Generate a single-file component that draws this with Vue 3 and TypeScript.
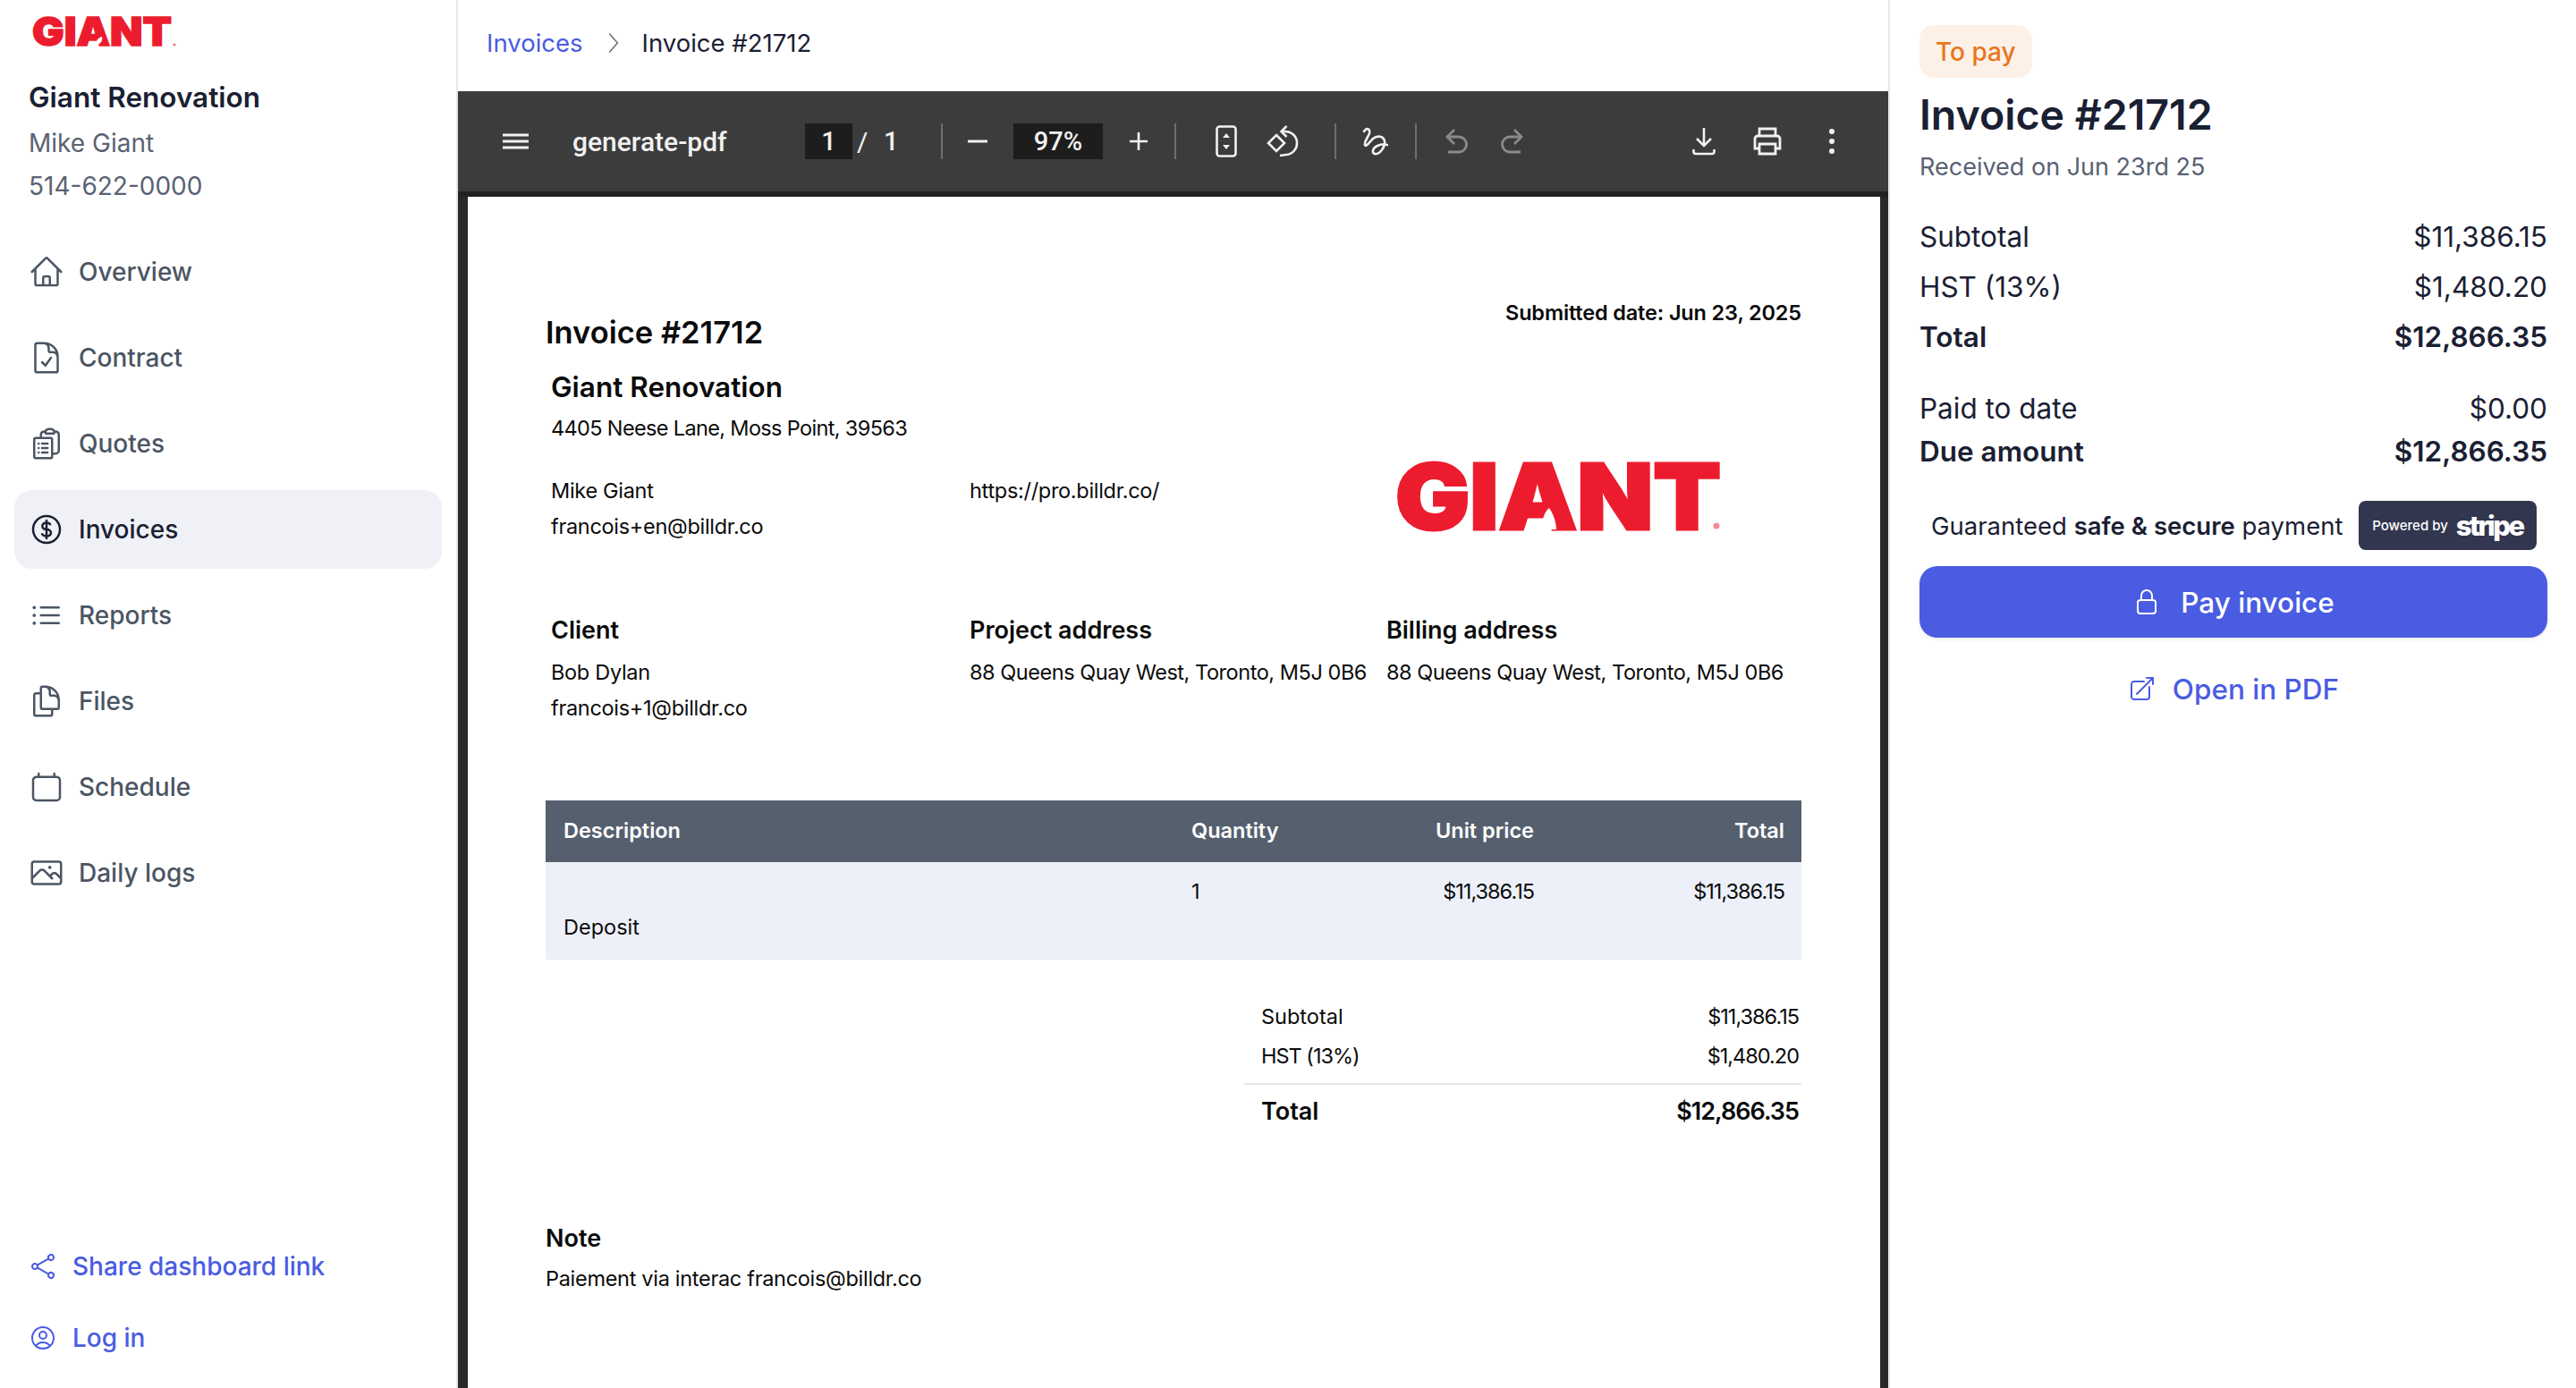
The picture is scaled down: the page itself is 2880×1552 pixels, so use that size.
<script setup lang="ts">
const nav = [
  { label: 'Overview', active: false, d: 'm2.25 12 8.954-8.955c.44-.439 1.152-.439 1.591 0L21.75 12M4.5 9.75v10.125c0 .621.504 1.125 1.125 1.125H9.75v-4.875c0-.621.504-1.125 1.125-1.125h2.25c.621 0 1.125.504 1.125 1.125V21h4.125c.621 0 1.125-.504 1.125-1.125V9.75M8.25 21h8.25' },
  { label: 'Contract', active: false, d: 'M10.125 2.25h-4.5c-.621 0-1.125.504-1.125 1.125v17.25c0 .621.504 1.125 1.125 1.125h12.75c.621 0 1.125-.504 1.125-1.125v-9M10.125 2.25h.375a9 9 0 0 1 9 9v.375M10.125 2.25A3.375 3.375 0 0 1 13.5 5.625v1.5c0 .621.504 1.125 1.125 1.125h1.5a3.375 3.375 0 0 1 3.375 3.375M9 15l2.25 2.25L15 12' },
  { label: 'Quotes', active: false, d: 'M9 12h3.75M9 15h3.75M9 18h3.75m3 .75H18a2.25 2.25 0 0 0 2.25-2.25V6.108c0-1.135-.845-2.098-1.976-2.192a48.424 48.424 0 0 0-1.123-.08m-5.801 0c-.065.21-.1.433-.1.664 0 .414.336.75.75.75h4.5a.75.75 0 0 0 .75-.75 2.25 2.25 0 0 0-.1-.664m-5.8 0A2.251 2.251 0 0 1 13.5 2.25H15c1.012 0 1.867.668 2.15 1.586m-5.8 0c-.376.023-.75.05-1.124.08C9.095 4.01 8.25 4.973 8.25 6.108V8.25m0 0H4.875c-.621 0-1.125.504-1.125 1.125v11.25c0 .621.504 1.125 1.125 1.125h9.75c.621 0 1.125-.504 1.125-1.125V9.375c0-.621-.504-1.125-1.125-1.125H8.25ZM6.75 12h.008v.008H6.75V12Zm0 3h.008v.008H6.75V15Zm0 3h.008v.008H6.75V18Z' },
  { label: 'Invoices', active: true, d: 'M12 6v12m-3-2.818.879.659c1.171.879 3.07.879 4.242 0 1.172-.879 1.172-2.303 0-3.182C13.536 12.219 12.768 12 12 12c-.725 0-1.45-.22-2.003-.659-1.106-.879-1.106-2.303 0-3.182s2.9-.879 4.006 0l.415.33M21 12a9 9 0 1 1-18 0 9 9 0 0 1 18 0Z' },
  { label: 'Reports', active: false, d: 'M8.25 6.75h12M8.25 12h12m-12 5.25h12M3.75 6.75h.007v.008H3.75V6.75Zm.375 0a.375.375 0 1 1-.75 0 .375.375 0 0 1 .75 0ZM3.75 12h.007v.008H3.75V12Zm.375 0a.375.375 0 1 1-.75 0 .375.375 0 0 1 .75 0Zm-.375 5.25h.007v.008H3.75v-.008Zm.375 0a.375.375 0 1 1-.75 0 .375.375 0 0 1 .75 0Z' },
  { label: 'Files', active: false, d: 'M15.75 17.25v3.375c0 .621-.504 1.125-1.125 1.125h-9.75a1.125 1.125 0 0 1-1.125-1.125V7.875c0-.621.504-1.125 1.125-1.125H6.75a9.06 9.06 0 0 1 1.5.124m7.5 10.376h3.375c.621 0 1.125-.504 1.125-1.125V11.25c0-4.46-3.243-8.161-7.5-8.876a9.06 9.06 0 0 0-1.5-.124H9.375c-.621 0-1.125.504-1.125 1.125v3.5m7.5 10.375H9.375a1.125 1.125 0 0 1-1.125-1.125v-9.25m12 6.625v-1.875a3.375 3.375 0 0 0-3.375-3.375h-1.5a1.125 1.125 0 0 1-1.125-1.125v-1.5a3.375 3.375 0 0 0-3.375-3.375H9.75' },
  { label: 'Schedule', active: false, d: 'M6.75 3v2.25M17.25 3v2.25M5.25 5.25h13.5A2.25 2.25 0 0 1 21 7.5v11.25A2.25 2.25 0 0 1 18.75 21H5.25A2.25 2.25 0 0 1 3 18.75V7.5a2.25 2.25 0 0 1 2.25-2.25Z' },
  { label: 'Daily logs', active: false, d: 'm2.25 15.75 5.159-5.159a2.25 2.25 0 0 1 3.182 0l5.159 5.159m-1.5-1.5 1.409-1.409a2.25 2.25 0 0 1 3.182 0l2.909 2.909m-18 3.75h16.5a1.5 1.5 0 0 0 1.5-1.5V6a1.5 1.5 0 0 0-1.5-1.5H3.75A1.5 1.5 0 0 0 2.25 6v12a1.5 1.5 0 0 0 1.5 1.5Zm10.5-11.25h.008v.008h-.008V8.25Zm.375 0a.375.375 0 1 1-.75 0 .375.375 0 0 1 .75 0Z' },
]
const shareD = 'M7.217 10.907a2.25 2.25 0 1 0 0 2.186m0-2.186c.18.324.283.696.283 1.093s-.103.77-.283 1.093m0-2.186 9.566-5.314m-9.566 7.5 9.566 5.314m0 0a2.25 2.25 0 1 0 3.935 2.186 2.25 2.25 0 0 0-3.935-2.186Zm0-12.814a2.25 2.25 0 1 0 3.933-2.185 2.25 2.25 0 0 0-3.933 2.185Z'
const userD = 'M17.982 18.725A7.488 7.488 0 0 0 12 15.75a7.488 7.488 0 0 0-5.982 2.975m11.963 0a9 9 0 1 0-11.963 0m11.963 0A8.966 8.966 0 0 1 12 21a8.966 8.966 0 0 1-5.982-2.275M15 9.75a3 3 0 1 1-6 0 3 3 0 0 1 6 0Z'
const lockD = 'M16.5 10.5V6.75a4.5 4.5 0 1 0-9 0v3.75m-.75 11.25h10.5a2.25 2.25 0 0 0 2.25-2.25v-6.75a2.25 2.25 0 0 0-2.25-2.25H6.75a2.25 2.25 0 0 0-2.25 2.25v6.75a2.25 2.25 0 0 0 2.25 2.25Z'
const extD = 'M13.5 6H5.25A2.25 2.25 0 0 0 3 8.25v10.5A2.25 2.25 0 0 0 5.25 21h10.5A2.25 2.25 0 0 0 18 18.75V10.5m-10.5 6L21 3m0 0h-5.25M21 3v5.25'
</script>

<template>
  <div class="root">
    <aside class="side">
      <svg class="side-logo" viewBox="0 0 162 34" width="162" height="34" role="img" aria-label="GIANT">
        <text x="0" y="33" textLength="156" lengthAdjust="spacingAndGlyphs" class="logo-text">GIANT</text>
        <path d="M71 33c0-6 3-9 7-10 1 4-1 8-7 10Z" fill="#fff" />
        <circle cx="159" cy="32" r="1.6" fill="#ec1c2e" opacity=".6" />
      </svg>
      <div class="side-name">Giant Renovation</div>
      <div class="side-line">Mike Giant</div>
      <div class="side-line">514-622-0000</div>
      <nav class="nav">
        <a v-for="n in nav" :key="n.label" class="nav-item" :class="{ active: n.active }">
          <svg class="nav-icon" viewBox="0 0 24 24" fill="none" stroke="currentColor" stroke-width="1.5" stroke-linecap="round" stroke-linejoin="round"><path :d="n.d" /></svg>
          <span>{{ n.label }}</span>
        </a>
      </nav>
      <div class="side-bottom">
        <a class="link-item">
          <svg class="link-icon" viewBox="0 0 24 24" fill="none" stroke="currentColor" stroke-width="1.5" stroke-linecap="round" stroke-linejoin="round"><path :d="shareD" /></svg>
          <span>Share dashboard link</span>
        </a>
        <a class="link-item">
          <svg class="link-icon" viewBox="0 0 24 24" fill="none" stroke="currentColor" stroke-width="1.5" stroke-linecap="round" stroke-linejoin="round"><path :d="userD" /></svg>
          <span>Log in</span>
        </a>
      </div>
    </aside>

    <main class="main">
      <div class="crumbs">
        <a class="crumb-link">Invoices</a>
        <svg class="crumb-sep" viewBox="0 0 24 24" fill="none" stroke="#6b7280" stroke-width="1.4" stroke-linecap="round" stroke-linejoin="round"><path d="m8.25 3.5 7.5 8.500-7.5 8.500" /></svg>
        <span class="crumb-cur">Invoice #21712</span>
      </div>

      <div class="viewer">
        <div class="toolbar">
          <svg class="tb-menu" viewBox="0 0 29 18" width="29" height="18"><path d="M0 2h29M0 9h29M0 16h29" stroke="#f1f1f1" stroke-width="3" /></svg>
          <span class="tb-title">generate-pdf</span>
          <span class="tb-input tb-page">1</span>
          <span class="tb-slash">/</span>
          <span class="tb-total">1</span>
          <i class="tb-div d1"></i>
          <svg class="tb-minus" viewBox="0 0 22 4" width="22" height="4"><path d="M0 2h22" stroke="#f1f1f1" stroke-width="3" /></svg>
          <span class="tb-input tb-zoom">97%</span>
          <svg class="tb-plus" viewBox="0 0 20 20" width="20" height="20"><path d="M0 10h20M10 0v20" stroke="#f1f1f1" stroke-width="2.6" /></svg>
          <i class="tb-div d2"></i>
          <svg class="tb-fit" viewBox="0 0 24 36" width="24" height="36" fill="none"><rect x="1.5" y="1.5" width="21" height="33" rx="3" stroke="#f1f1f1" stroke-width="2.6" /><path d="m12 9 4 5H8ZM12 27l-4-5h8Z" fill="#f1f1f1" /></svg>
          <svg class="tb-rot" viewBox="0 0 34 34" width="34" height="34" fill="none" stroke="#f1f1f1" stroke-width="2.6"><path d="m10 10 9 9-9 9-9-9Z" /><path d="M16 6h3a13 13 0 0 1 2 26l-7 1" /><path d="m21.500 0-6 6 6 6" /></svg>
          <i class="tb-div d3"></i>
          <svg class="tb-draw" viewBox="0 0 30 32" width="30" height="32" fill="none" stroke="#f1f1f1" stroke-width="2.6" stroke-linecap="round" stroke-linejoin="round"><path d="M3 5c3-5 7-3 6 2-1 4-6 9-5 13 1 3 5-3 9-7 5-4 12-3 13 3 1 7-6 15-11 14-4-1-2-7 3-9 4-2 8-2 11-1" /></svg>
          <i class="tb-div d4"></i>
          <svg class="tb-undo" viewBox="0 0 26 30" width="26" height="30" fill="none" stroke="#8a8a8a" stroke-width="2.8"><path d="M11 2 3 10l8 8" /><path d="M3 10h13a8 8 0 0 1 0 17H4" /></svg>
          <svg class="tb-redo" viewBox="0 0 26 30" width="26" height="30" fill="none" stroke="#8a8a8a" stroke-width="2.8"><path d="m15 2 8 8-8 8" /><path d="M23 10H10a8 8 0 0 0 0 17h12" /></svg>
          <svg class="tb-dl" viewBox="0 0 26 32" width="26" height="32" fill="none" stroke="#f1f1f1" stroke-width="2.6"><path d="M13 1v20M5 13l8 8 8-8" /><path d="M1.500 25v2.500a2.500 2.500 0 0 0 2.500 2.500h18a2.500 2.500 0 0 0 2.500-2.500V25" /></svg>
          <svg class="tb-print" viewBox="0 0 32 32" width="32" height="32" fill="none" stroke="#f1f1f1" stroke-width="2.8"><path d="M7 10V2h18v8" /><path d="M7 24H2V13a3 3 0 0 1 3-3h22a3 3 0 0 1 3 3v11h-5" /><path d="M7 19h18v11H7Z" /></svg>
          <svg class="tb-more" viewBox="0 0 6 30" width="6" height="30"><circle cx="3" cy="4" r="3" fill="#f1f1f1" /><circle cx="3" cy="15" r="3" fill="#f1f1f1" /><circle cx="3" cy="26" r="3" fill="#f1f1f1" /></svg>
        </div>
        <div class="pane">
          <div class="page">
            <div class="p-head">
              <h1 class="p-title">Invoice #21712</h1>
              <div class="p-date">Submitted date: Jun 23, 2025</div>
            </div>
            <div class="p-company">
              <div class="p-comp-name">Giant Renovation</div>
              <div class="p-text addr">4405 Neese Lane, Moss Point, 39563</div>
              <div class="p-grid contact">
                <div>
                  <div class="p-text">Mike Giant</div>
                  <div class="p-text">francois+en@billdr.co</div>
                </div>
                <div class="p-text">https://pro.billdr.co/</div>
                <svg class="p-logo" viewBox="0 0 366 76" width="366" height="76" role="img" aria-label="GIANT">
                  <text x="0" y="75" textLength="364" lengthAdjust="spacingAndGlyphs" class="logo-text big">GIANT</text>
                  <path d="M166 75c-3-10 0-19 6-24 5 7 8 17 8 24Z" fill="#fff" />
                  <circle cx="359" cy="71" r="3.500" fill="#ec1c2e" opacity=".5" />
                </svg>
              </div>
              <div class="p-grid parties">
                <div>
                  <div class="p-head3">Client</div>
                  <div class="p-text s8">Bob Dylan</div>
                  <div class="p-text">francois+1@billdr.co</div>
                </div>
                <div>
                  <div class="p-head3">Project address</div>
                  <div class="p-text s8 tight">88 Queens Quay West, Toronto, M5J 0B6</div>
                </div>
                <div>
                  <div class="p-head3">Billing address</div>
                  <div class="p-text s8 tight">88 Queens Quay West, Toronto, M5J 0B6</div>
                </div>
              </div>
            </div>
            <div class="t-head">
              <span>Description</span><span>Quantity</span><span class="r">Unit price</span><span class="r">Total</span>
            </div>
            <div class="t-body">
              <span></span><span>1</span><span class="r num">$11,386.15</span><span class="r num">$11,386.15</span>
              <span>Deposit</span>
            </div>
            <div class="sum">
              <div class="sum-row"><span>Subtotal</span><span class="num">$11,386.15</span></div>
              <div class="sum-row"><span class="num">HST (13%)</span><span class="num">$1,480.20</span></div>
              <div class="sum-row total"><span>Total</span><span class="num">$12,866.35</span></div>
            </div>
            <div class="note-h">Note</div>
            <div class="p-text note">Paiement via interac francois@billdr.co</div>
          </div>
        </div>
      </div>
    </main>

    <aside class="panel">
      <span class="badge">To pay</span>
      <h2 class="title">Invoice #21712</h2>
      <div class="received">Received on Jun 23rd 25</div>
      <div class="rows first">
        <div class="row"><span>Subtotal</span><span>$11,386.15</span></div>
        <div class="row"><span>HST (13%)</span><span>$1,480.20</span></div>
        <div class="row b"><span>Total</span><span>$12,866.35</span></div>
      </div>
      <div class="rows second">
        <div class="row"><span>Paid to date</span><span>$0.00</span></div>
        <div class="row b"><span>Due amount</span><span>$12,866.35</span></div>
      </div>
      <div class="secure">
        <span class="secure-text">Guaranteed <b>safe &amp; secure</b> payment</span>
        <span class="stripe"><small>Powered by</small><strong>stripe</strong></span>
      </div>
      <button class="pay">
        <svg class="pay-icon" viewBox="0 0 24 24" fill="none" stroke="#fff" stroke-width="1.5" stroke-linecap="round" stroke-linejoin="round"><path :d="lockD" /></svg>
        Pay invoice
      </button>
      <a class="open">
        <svg class="open-icon" viewBox="0 0 24 24" fill="none" stroke="currentColor" stroke-width="1.5" stroke-linecap="round" stroke-linejoin="round"><path :d="extD" /></svg>
        Open in PDF
      </a>
    </aside>
  </div>
</template>

<style>
html, body { margin: 0; background: #fff; }
</style>

<style scoped>
.root {
  display: flex;
  width: 2880px;
  height: 1552px;
  overflow: hidden;
  font-family: Inter, "Liberation Sans", sans-serif;
  color: #1a2033;
  background: #fff;
}
.side {
  box-sizing: border-box;
  width: 512px;
  flex: none;
  height: 100%;
  border-right: 2px solid #e2e8f0;
  display: flex;
  flex-direction: column;
  padding-top: 18px;
}
.side-logo { margin-left: 36px; display: block; overflow: visible; }
.logo-text {
  font-family: Inter, "Liberation Sans", sans-serif;
  font-weight: 900;
  font-size: 44px;
  fill: #ec1c2e;
  stroke: #ec1c2e;
  stroke-width: 1.5px;
}
.logo-text.big { font-size: 102px; stroke-width: 3px; }
.side-name {
  margin: 35px 0 0 32px;
  font-size: 31.500px;
  line-height: 44px;
  font-weight: 600;
}
.side-line {
  margin-left: 32px;
  font-size: 28px;
  line-height: 48px;
  color: #596273;
}
.side-name + .side-line { margin-top: 5px; }
.nav {
  margin: 28px 16px 0;
  display: flex;
  flex-direction: column;
  gap: 8px;
}
.nav-item {
  height: 88px;
  border-radius: 20px;
  display: flex;
  align-items: center;
  gap: 16px;
  padding-left: 16px;
  font-size: 28px;
  font-weight: 500;
  color: #4b5563;
}
.nav-item.active { background: #eff1f6; color: #1a2033; }
.nav-icon { width: 40px; height: 40px; flex: none; }
.side-bottom { margin-top: auto; padding: 0 0 16px 32px; }
.link-item {
  height: 80px;
  display: flex;
  align-items: center;
  gap: 17px;
  font-size: 28px;
  font-weight: 500;
  color: #4a5ce2;
}
.link-icon { width: 32px; height: 32px; flex: none; }

.main { width: 1599px; flex: none; display: flex; flex-direction: column; height: 100%; }
.crumbs {
  box-sizing: border-box;
  height: 102px;
  flex: none;
  display: flex;
  align-items: center;
  padding: 0 0 6px 32px;
  font-size: 27.500px;
}
.crumb-link { color: #4a5ce2; }
.crumb-sep { width: 28px; height: 30px; margin: 0 18px 0 20px; }
.viewer { flex: 1; min-height: 0; display: flex; flex-direction: column; background: #282828; }
.toolbar {
  height: 112px;
  flex: none;
  background: #3c3c3c;
  display: flex;
  align-items: center;
  color: #f1f1f1;
  font-family: Roboto, "Liberation Sans", sans-serif;
  box-shadow: 0 6px 0 #222;
  position: relative;
}
.tb-menu { margin-left: 50px; flex: none; }
.tb-title { margin-left: 49px; width: 260px; font-size: 30px; font-weight: 500; flex: none; }
.tb-input {
  background: #1d1d1d;
  height: 40px;
  display: flex;
  align-items: center;
  justify-content: center;
  font-size: 29px;
  font-weight: 500;
  flex: none;
}
.tb-page { width: 53px; }
.tb-slash { margin-left: 5px; font-size: 30px; width: 30px; flex: none; }
.tb-total { font-size: 29px; font-weight: 500; width: 64px; flex: none; }
.tb-div { width: 2px; height: 40px; background: #6e6e6e; flex: none; }
.tb-minus { margin-left: 28px; flex: none; }
.tb-zoom { margin-left: 29px; width: 100px; }
.tb-plus { margin-left: 30px; flex: none; }
.d2 { margin-left: 30px; }
.tb-fit { margin-left: 44px; flex: none; }
.tb-rot { margin-left: 34px; flex: none; overflow: visible; }
.d3 { margin-left: 41px; }
.tb-draw { margin-left: 28px; flex: none; }
.d4 { margin-left: 30px; }
.tb-undo { margin-left: 31px; flex: none; }
.tb-redo { margin-left: 37px; flex: none; }
.tb-dl { margin-left: 188px; flex: none; }
.tb-print { margin-left: 42px; flex: none; }
.tb-more { margin-left: 53px; flex: none; }

.pane { flex: 1; min-height: 0; overflow: hidden; padding: 6px 9px 0 11px; }
.page {
  box-sizing: border-box;
  background: #fff;
  min-height: 1400px;
  padding: 114px 88px 0 87px;
  color: #0b0b0b;
}
.p-head { display: flex; justify-content: space-between; align-items: flex-start; }
.p-title { margin: 16px 0 0; font-size: 34.500px; line-height: 44px; font-weight: 600; }
.p-date { font-size: 23.500px; line-height: 32px; font-weight: 600; letter-spacing: -.15px; }
.p-company { padding-left: 6px; }
.p-comp-name { margin-top: 19px; font-size: 31.500px; line-height: 40px; font-weight: 600; }
.p-text { font-size: 23.500px; line-height: 40.500px; letter-spacing: -.3px; }
.addr { margin-top: 6px; letter-spacing: -.65px; }
.tight { letter-spacing: -.45px; }
.p-grid { display: grid; grid-template-columns: 468px 466px 1fr; }
.contact { margin-top: 29px; }
.p-logo { display: block; margin: -12px 0 0 10px; overflow: visible; }
.parties { margin-top: 75px; }
.p-head3 { font-size: 27px; line-height: 40px; font-weight: 600; }
.s8 { margin-top: 7px; }
.t-head, .t-body {
  display: grid;
  grid-template-columns: 702px 168px 215px 280px;
  padding: 0 20px;
  font-size: 23.500px;
  line-height: 40px;
}
.t-head {
  margin-top: 82px;
  height: 69px;
  align-items: center;
  background: #555f6e;
  color: #fff;
  font-weight: 600;
}
.t-body { background: #edf0f8; padding-top: 13px; padding-bottom: 16px; }
.r { text-align: right; }
.num { letter-spacing: -1px; }
.sum { margin: 42px 0 0 781px; }
.sum-row {
  display: flex;
  justify-content: space-between;
  padding: 0 3px 0 19px;
  font-size: 23.500px;
  line-height: 44px;
}
.sum-row.total {
  margin-top: 8px;
  border-top: 2px solid #e5e7eb;
  padding-top: 8px;
  font-size: 27px;
  font-weight: 600;
}
.note-h { margin-top: 100px; font-size: 27px; line-height: 40px; font-weight: 600; }
.note { margin-top: 5px; }

.panel {
  flex: 1;
  box-sizing: border-box;
  border-left: 2px solid #e2e8f0;
  padding: 28px 32px 0 33px;
  display: flex;
  flex-direction: column;
  align-items: stretch;
}
.badge {
  align-self: flex-start;
  height: 59px;
  padding: 0 18px;
  display: flex;
  align-items: center;
  border-radius: 16px;
  background: #fdf1e7;
  color: #e8761d;
  font-size: 28px;
  font-weight: 500;
}
.title { margin: 13px 0 0; font-size: 46.500px; line-height: 56px; font-weight: 600; }
.received { margin-top: 11px; font-size: 27px; line-height: 40px; color: #596273; }
.rows.first { margin-top: 29px; }
.rows.first .row { height: 56px; }
.rows.second { margin-top: 28px; }
.rows.second .row { height: 48px; }
.row { display: flex; justify-content: space-between; align-items: center; font-size: 31.500px; }
.row.b { font-weight: 600; }
.secure {
  margin-top: 32px;
  padding: 0 12px 0 13px;
  height: 55px;
  display: flex;
  align-items: center;
  justify-content: space-between;
  font-size: 27.500px;
}
.secure-text { white-space: nowrap; }
.secure b { font-weight: 600; }
.stripe {
  width: 199px;
  height: 55px;
  box-sizing: border-box;
  background: #32364f;
  border-radius: 8px;
  color: #fff;
  display: flex;
  align-items: center;
  justify-content: center;
  gap: 9px;
  flex: none;
}
.stripe small { font-size: 15px; font-weight: 500; white-space: nowrap; }
.stripe strong { font-size: 31px; font-weight: 800; letter-spacing: -2.500px; }
.pay {
  margin-top: 18px;
  height: 80px;
  border: 0;
  border-radius: 20px;
  background: #4a5ce2;
  color: #fff;
  font: 500 31.500px Inter, "Liberation Sans", sans-serif;
  display: flex;
  align-items: center;
  justify-content: center;
  gap: 22px;
  box-shadow: 0 2px 4px rgba(0, 0, 0, .08);
}
.pay-icon { width: 32px; height: 32px; }
.open {
  margin-top: 33px;
  height: 48px;
  display: flex;
  align-items: center;
  justify-content: center;
  gap: 18px;
  color: #4a5ce2;
  font-size: 31.500px;
  font-weight: 500;
}
.open-icon { width: 32px; height: 32px; }
</style>
